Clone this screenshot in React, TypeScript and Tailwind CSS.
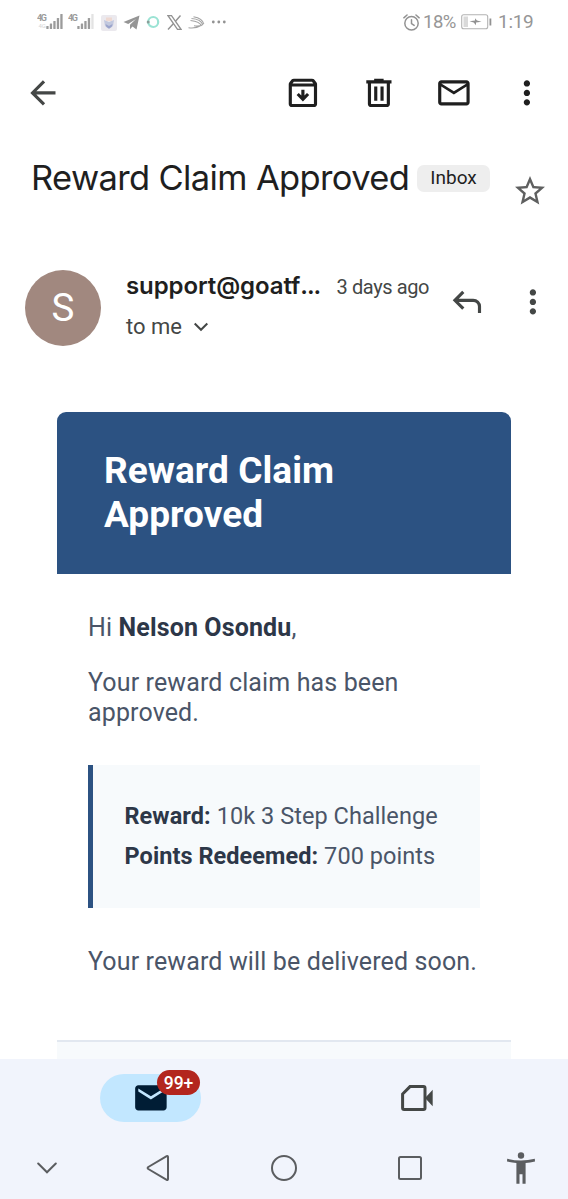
import type { ReactNode } from "react";

type IconProps = { d: string; className?: string };

function Icon({ d, className = "" }: IconProps) {
  return (
    <svg viewBox="0 0 24 24" fill="currentColor" className={`shrink-0 ${className}`}>
      <path d={d} />
    </svg>
  );
}

const icons = {
  back: "M20 11H7.83l5.59-5.59L12 4l-8 8 8 8 1.41-1.41L7.83 13H20v-2z",
  archive:
    "m12 17.4 4-4-1.4-1.4-1.6 1.6V10h-2v3.6L9.4 12 8 13.400l4 4ZM5 8v11h14V8H5Zm0 13q-.825 0-1.413-.588T3 19V6.525q0-.35.113-.675t.337-.6L4.7 3.725q.275-.35.687-.538T6.25 3h11.5q.45 0 .863.188t.687.537l1.25 1.525q.225.275.338.6t.112.675V19q0 .825-.588 1.413T19 21H5Zm.4-15h13.2l-.85-1H6.25L5.4 6Z",
  trash:
    "M7 21q-.825 0-1.413-.588T5 19V6H4V4h5V3h6v1h5v2h-1v13q0 .825-.588 1.413T17 21H7ZM17 6H7v13h10V6ZM9 17h2V8H9v9Zm4 0h2V8h-2v9Z",
  mail: "M4 20q-.825 0-1.413-.588T2 18V6q0-.825.588-1.413T4 4h16q.825 0 1.413.588T22 6v12q0 .825-.588 1.413T20 20H4Zm8-7L4 8v10h16V8l-8 5Zm0-2 8-5H4l8 5ZM4 8V6v12V8Z",
  mailFilled:
    "M4 20q-.825 0-1.413-.588T2 18V6q0-.825.588-1.413T4 4h16q.825 0 1.413.588T22 6v12q0 .825-.588 1.413T20 20H4Zm8-7 8-5V6l-8 5-8-5v2l8 5Z",
  more: "M12 8c1.1 0 2-.9 2-2s-.9-2-2-2-2 .9-2 2 .9 2 2 2zm0 2c-1.1 0-2 .9-2 2s.9 2 2 2 2-.9 2-2-.9-2-2-2zm0 6c-1.1 0-2 .9-2 2s.9 2 2 2 2-.9 2-2-.9-2-2-2z",
  star: "m22 9.240-7.190-.620L12 2 9.190 8.630 2 9.240l5.460 4.730L5.820 21 12 17.270 18.180 21l-1.630-7.030L22 9.240zM12 15.400l-3.760 2.270 1-4.280-3.320-2.880 4.380-.380L12 6.100l1.710 4.040 4.380.380-3.320 2.880 1 4.280L12 15.400z",
  reply:
    "M19 19v-4q0-1.250-.875-2.125T16 12H6.825l3.600 3.600L9 17l-6-6 6-6 1.425 1.400-3.600 3.600H16q2.075 0 3.538 1.463T21 15v4h-2Z",
};

function Signal({ faint }: { faint?: boolean }) {
  return (
    <svg viewBox="0 0 28 20" className="h-5 w-7 shrink-0" fill="#9b9b9b">
      <text x="0" y="8.500" fontSize="9" fontWeight="700" fontFamily="Roboto, sans-serif" textLength="10">
        4G
      </text>
      {!faint && (
        <text x="1.500" y="16" fontSize="6" fill="#d5d5d5" fontFamily="Roboto, sans-serif">
          4G
        </text>
      )}
      <rect x="9.300" y="14" width="2.300" height="3" rx="0.500" />
      <rect x="12.800" y="11.500" width="2.300" height="5.500" rx="0.500" />
      <rect x="16.300" y="9" width="2.300" height="8" rx="0.500" />
      <rect x="19.800" y="6" width="2.300" height="11" rx="0.500" />
      <rect x="23.300" y="2" width="2.300" height="15" rx="0.500" fill={faint ? "#e3e3e3" : "#9b9b9b"} />
    </svg>
  );
}

function StatusBar() {
  return (
    <div className="flex h-[44px] items-center justify-between pl-[37px] pr-[35px] font-[Roboto,sans-serif] text-[19px] text-[#969696]">
      <div className="flex items-center">
        <Signal />
        <div className="ml-[3px]">
          <Signal faint />
        </div>
        <svg viewBox="0 0 16 16" className="ml-[5px] mt-[2px] h-4 w-4">
          <rect width="16" height="16" rx="2" fill="#ebe9ee" />
          <path d="M3 5l5 2 5-2-1 6-4 3-4-3z" fill="#c2c8de" />
          <path d="M5 2.500h6V6H5z" fill="#eed9d2" />
          <path d="M4.500 9l3.500 2 3.500-2-1 3-2.500 1.500L5.500 12z" fill="#9aa3cb" />
        </svg>
        <svg viewBox="0 0 17 15" className="ml-[6px] h-[15px] w-[17px]" fill="#959595">
          <path d="M16.500.5.5 7l4.700 1.900L13 4 7 9.700v4.500l2.500-2.600 4 2.900z" />
        </svg>
        <svg viewBox="0 0 14 14" className="ml-[6px] h-[14px] w-[14px]" fill="none">
          <circle cx="7.200" cy="7" r="5" stroke="#9be3d4" strokeWidth="2.200" />
          <circle cx="2.200" cy="7" r="1.500" fill="#8a9e99" />
        </svg>
        <svg viewBox="0 0 15 15" className="ml-[7px] h-[15px] w-[15px]" fill="none" stroke="#929292">
          <path d="M1 .7h3.500l9.500 13.600h-3.500z" strokeWidth="1.300" />
          <path d="M13.500.5 8.500 6.200M6.300 8.700 1 14.500" strokeWidth="1.400" />
        </svg>
        <svg viewBox="0 0 17 13" className="ml-[6px] h-[13px] w-[17px]" fill="none" stroke="#a3a3a3" strokeWidth="1.100">
          <path d="M5.500.8C11 1.800 15 4.500 15.800 8M3.500 2.500c5 .3 10 2.500 11.500 6.500M2.500 4.500c5.500.5 10 2.500 11 5.500M.5 11.800c6 .7 9 0 12-2M6 9.800c3 .6 6 .4 8.500-1" />
        </svg>
        <svg viewBox="0 0 16 4" className="ml-[6px] h-1 w-4" fill="#929292">
          <circle cx="2.300" cy="2" r="1.400" />
          <circle cx="7.800" cy="2" r="1.400" />
          <circle cx="13.300" cy="2" r="1.400" />
        </svg>
      </div>
      <div className="flex items-center">
        <svg viewBox="0 0 16 16" className="mr-[3px] h-[17px] w-[17px]" fill="none" stroke="#929292" strokeWidth="1.400" strokeLinecap="round">
          <circle cx="8" cy="8.700" r="6.300" />
          <path d="M8 5.500v3.500l2.500 1.700M.8 3.600l3-2.600M15.200 3.600l-3-2.600" />
        </svg>
        <span className="mt-[2px] w-[34px] text-[18.500px] tracking-[-0.500px]">18%</span>
        <svg viewBox="0 0 31 16" className="ml-1 h-4 w-[31px]" fill="none">
          <rect x="0.700" y="0.700" width="26" height="14" rx="2" stroke="#b3b3b3" strokeWidth="1.100" />
          <rect x="2.500" y="2.500" width="4.500" height="10.500" fill="#d9d9d9" />
          <path d="M8.500 7.200 14 6.500V4.300l2 2.200 4.500 1.300-5.500.8v2.600l-2.300-2.800z" fill="#929292" />
          <rect x="28.500" y="4.500" width="1.800" height="7" fill="#929292" />
        </svg>
        <span className="ml-[6px] mt-[1px] w-[35px] whitespace-nowrap tracking-[-0.300px]">1:19</span>
      </div>
    </div>
  );
}

function Toolbar() {
  return (
    <div className="flex h-[98px] items-center text-[#1f1f1f]">
      <Icon d={icons.back} className="mb-px ml-[24px] size-[37.800px] text-[#444746]" />
      <Icon d={icons.archive} className="ml-[222px] size-[37.800px]" />
      <Icon d={icons.trash} className="ml-[38px] size-[37.800px]" />
      <Icon d={icons.mail} className="ml-[38px] size-[37.800px]" />
      <Icon d={icons.more} className="ml-[35px] size-[37.800px]" />
    </div>
  );
}

function Subject() {
  return (
    <div className="flex h-[108px] pl-[31px] font-[Inter,sans-serif]">
      <h1 className="mt-[14px] w-[378px] whitespace-nowrap text-[34.500px] leading-[44px] tracking-[-0.640px] text-[#1f1f1f]">
        Reward Claim Approved
      </h1>
      <span className="ml-2 mt-[23px] h-[27px] w-[73px] rounded-[7px] bg-[#eeeeee] text-center font-[Roboto,sans-serif] text-[19px] leading-[26px] text-[#1f1f1f]">
        Inbox
      </span>
      <Icon d={icons.star} className="ml-[22px] mt-[31px] size-[36px] text-[#5f6060]" />
    </div>
  );
}

function Sender() {
  return (
    <div className="flex h-[162px] pl-[25px] pt-[20px] text-[#444746]">
      <div className="flex size-[76px] items-center justify-center rounded-full bg-[#a1887f] font-[Roboto,sans-serif] text-[38.500px] text-white">
        S
      </div>
      <div className="ml-[25px] w-[303px]">
        <div className="flex h-[32px] items-baseline whitespace-nowrap leading-[32px]">
          <span className="w-[211px] font-[Inter,sans-serif] text-[24px] font-semibold tracking-[-0.100px] text-[#1f1f1f]">
            support@goatf<span className="tracking-[-1px]">...</span>
          </span>
          <span className="font-[Roboto,sans-serif] text-[20px] tracking-[-0.400px]">3 days ago</span>
        </div>
        <div className="mt-[9px] flex h-[30px] items-center font-[Roboto,sans-serif] text-[22px]">
          <span className="w-[56px]">to me</span>
          <svg viewBox="0 0 16 10" className="ml-[11px] mt-px h-[10px] w-4" fill="none" stroke="currentColor" strokeWidth="2">
            <path d="M1.700 1.500 8 7.800l6.300-6.300" />
          </svg>
        </div>
      </div>
      <Icon d={icons.reply} className="ml-[19px] mt-[13px] size-[37.800px]" />
      <Icon d={icons.more} className="ml-[28.500px] mt-[12.500px] size-[37.800px]" />
    </div>
  );
}

function Strong({ children }: { children: ReactNode }) {
  return <strong className="font-bold text-[#2d3748]">{children}</strong>;
}

function Message() {
  return (
    <article className="mx-[57px] h-[647px] overflow-hidden whitespace-nowrap font-[Roboto,sans-serif] text-[25px] leading-[30px] tracking-[0.130px] text-[#4a5568]">
      <h2 className="h-[162px] rounded-t-[9px] bg-[#2c5282] pl-[47px] pt-[37px] text-[37px] font-bold leading-[43.500px] tracking-[0.050px] text-white">
        Reward Claim
        <br />
        Approved
      </h2>
      <div className="h-[466px] px-[31px] pt-[39px]">
        <p>
          Hi <Strong>Nelson Osondu</Strong>,
        </p>
        <p className="mt-[25px]">
          Your reward claim has been
          <br />
          approved.
        </p>
        <div className="mt-[37px] h-[143px] border-l-[5px] border-[#2c5282] bg-[#f7fafc] pl-[31.500px] pt-[31px] text-[23.500px] leading-[40px] tracking-[0.060px]">
          <p>
            <Strong>Reward:</Strong> 10k 3 Step Challenge
          </p>
          <p>
            <Strong>Points Redeemed:</Strong> 700 points
          </p>
        </div>
        <p className="mt-[39px]">Your reward will be delivered soon.</p>
      </div>
      <footer className="h-5 border-t-2 border-[#e2e8f0] bg-[#f7fafc]" />
    </article>
  );
}

function AppTabs() {
  return (
    <nav className="grid h-[78px] grid-cols-2 justify-items-center px-[17px]">
      <div className="relative mt-[15px] flex h-[48px] w-[101px] items-center justify-center rounded-full bg-[#c2e7ff]">
        <Icon d={icons.mailFilled} className="size-[37.800px] text-[#001d35]" />
        <span className="absolute -top-[4px] right-px h-[25px] w-[43px] rounded-full bg-[#b3261e] text-center font-[Roboto,sans-serif] text-[17.500px] font-medium leading-[26px] text-white">
          99+
        </span>
      </div>
      <svg viewBox="0 0 32 26" className="mr-[2px] mt-[26px] h-[26px] w-8" fill="none">
        <path d="M9 1.600h13.500q1.500 0 1.500 1.500v19.800q0 1.500-1.500 1.500H3.100q-1.500 0-1.500-1.500V9z" stroke="#444746" strokeWidth="3" />
        <path d="M24 13 31.700 4.800v16.400z" fill="#444746" />
      </svg>
    </nav>
  );
}

function SystemNav() {
  return (
    <nav className="grid h-[62px] grid-cols-[94px_127px_126px_126px_95px] items-center justify-items-center pb-px text-[#5b5d60]">
      <svg viewBox="0 0 20 12" className="h-3 w-5" fill="none" stroke="currentColor" strokeWidth="2" strokeLinecap="round">
        <path d="M1.200 1.500 10 10.300l8.800-8.800" />
      </svg>
      <svg viewBox="0 0 24 28" className="h-7 w-6" fill="none" stroke="currentColor" strokeWidth="2" strokeLinejoin="round">
        <path d="M20.700 2.200Q22 1.500 22 3v22q0 1.500-1.300.8L2.300 15q-1.300-1 0-2z" />
      </svg>
      <svg viewBox="0 0 28 28" className="size-7" fill="none" stroke="currentColor" strokeWidth="2">
        <circle cx="14" cy="14" r="12" />
      </svg>
      <svg viewBox="0 0 28 28" className="size-7" fill="none" stroke="currentColor" strokeWidth="2">
        <rect x="3" y="3" width="22" height="22" rx="1.500" />
      </svg>
      <svg viewBox="0 0 28 32" className="h-8 w-7" fill="currentColor">
        <circle cx="14" cy="3.500" r="3.200" />
        <path d="M.2 6.800Q14 10.200 27.800 6.800l.2 2.700q-5 1.200-9.400 1.500v20.700h-3.100v-9.400h-3v9.400H9.400V11Q5 10.700 0 9.500z" />
      </svg>
    </nav>
  );
}

export default function App() {
  return (
    <main className="h-[1199px] w-[568px] overflow-hidden bg-white">
      <StatusBar />
      <Toolbar />
      <Subject />
      <Sender />
      <Message />
      <div className="bg-[#f1f4fc]">
        <AppTabs />
        <SystemNav />
      </div>
    </main>
  );
}
